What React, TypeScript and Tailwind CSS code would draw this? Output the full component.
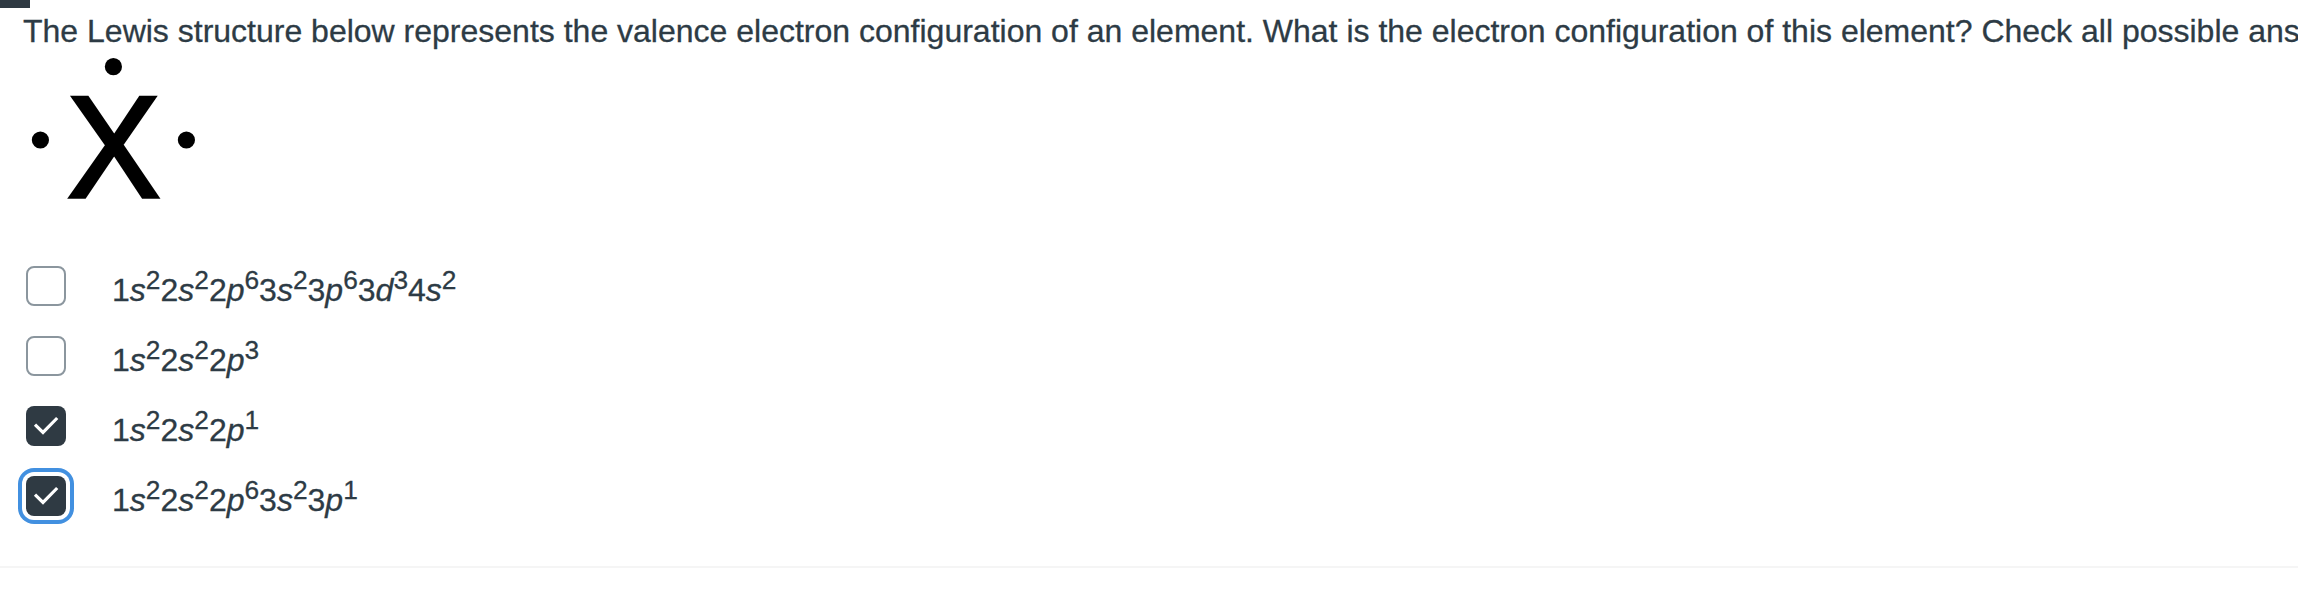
import { useState } from 'react';

interface Term {
  coefficient: string;
  orbital: string;
  electrons: string;
}

interface AnswerOptionProps {
  terms: Term[];
  checked: boolean;
  focused: boolean;
  onToggle: () => void;
}

// "2p6" -> shell 2, orbital p, 6 electrons
const parseTerms = (config: string): Term[] =>
  config.split(' ').map((part) => ({
    coefficient: part[0],
    orbital: part[1],
    electrons: part.slice(2),
  }));

const OPTIONS = [
  '1s2 2s2 2p6 3s2 3p6 3d3 4s2',
  '1s2 2s2 2p3',
  '1s2 2s2 2p1',
  '1s2 2s2 2p6 3s2 3p1',
];

const LewisStructure = () => (
  <svg width="180" height="148" viewBox="24 56 180 148" className="block overflow-visible">
    <circle cx="113.4" cy="66.7" r="8.6" />
    <circle cx="40.4" cy="140" r="8.6" />
    <circle cx="186.4" cy="140" r="8.6" />
    <text
      x="113.7"
      y="196.5"
      textAnchor="middle"
      textLength="93"
      lengthAdjust="spacingAndGlyphs"
      stroke="black"
      strokeWidth="3.4"
      className="font-['Liberation_Sans',Arial,sans-serif] text-[144.5px]"
    >
      X
    </text>
  </svg>
);

const AnswerOption = ({ terms, checked, focused, onToggle }: AnswerOptionProps) => (
  <div className="flex h-[70px] items-center">
    <button
      type="button"
      role="checkbox"
      aria-checked={checked}
      onClick={onToggle}
      className={`flex size-10 shrink-0 items-center justify-center rounded-lg outline-none ${
        checked ? 'bg-[#2f3a43]' : 'border-2 border-[#8b969e] bg-white'
      } ${focused ? 'ring-4 ring-[#4290e0] ring-offset-4' : ''}`}
    >
      {checked && (
        <svg width="40" height="40" viewBox="0 0 40 40" fill="none" stroke="white" strokeWidth="3.2">
          <path d="M9 18.6L17 26.4L31.2 12" />
        </svg>
      )}
    </button>
    <span className="ml-[46px] whitespace-nowrap pt-2">
      {terms.map((term, i) => (
        <span key={i}>
          {term.coefficient}
          <i>{term.orbital}</i>
          <sup className="-top-3 text-[26.3px]">{term.electrons}</sup>
        </span>
      ))}
    </span>
  </div>
);

const App = () => {
  const [checked, setChecked] = useState([false, false, true, true]);
  const [focused, setFocused] = useState(3);

  const toggle = (index: number) => {
    setChecked(checked.map((value, i) => (i === index ? !value : value)));
    setFocused(index);
  };

  return (
    <div className="h-[602px] w-full overflow-hidden bg-white font-['Liberation_Sans',Arial,sans-serif] text-[32px] leading-[36px] text-[#2d3b45] [-webkit-text-stroke:0.3px]">
      <div className="h-2 w-[30px] bg-[#2f3a43]" />
      <div className="border-b-2 border-[#f5f5f5] pb-[35px]">
        <p className="h-12 whitespace-nowrap pl-[23px] pt-[5px]">
          The Lewis structure below represents the valence electron configuration of an element. What is the electron
          configuration of this element? Check all possible ans
        </p>
        <div className="pl-6">
          <LewisStructure />
        </div>
        <div className="mt-[47px] pl-[26px]">
          {OPTIONS.map((config, i) => (
            <AnswerOption
              key={config}
              terms={parseTerms(config)}
              checked={checked[i]}
              focused={focused === i}
              onToggle={() => toggle(i)}
            />
          ))}
        </div>
      </div>
    </div>
  );
};

export default App;
